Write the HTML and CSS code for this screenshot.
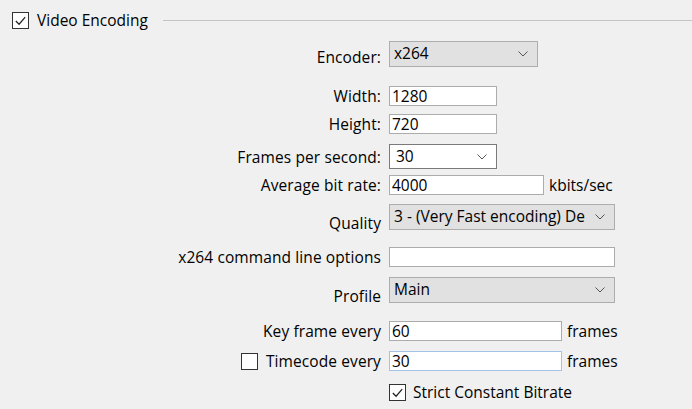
FILE: index.html
```html
<!DOCTYPE html>
<html>
<head>
<meta charset="utf-8">
<link rel="stylesheet" href="styles.css">
</head>
<body>
<div class="panel">
  <div class="header">
    <span class="check checked"><svg viewBox="0 0 16 16" width="16" height="16"><polyline points="3,8.5 6.5,12 13,4.5" fill="none" stroke="#222" stroke-width="1.3"/></svg></span>
    <span class="header-title">Video Encoding</span>
    <span class="header-line"></span>
  </div>

  <div class="row r-encoder">
    <label class="lbl lbl-low">Encoder:</label>
    <div class="combo gray w-enc"><span class="val">x264</span><svg class="chev" viewBox="0 0 10 6" width="10" height="6"><polyline points="0.5,0.5 5,5 9.5,0.5" fill="none" stroke="#555" stroke-width="1"/></svg></div>
  </div>

  <div class="row r-width">
    <label class="lbl">Width:</label>
    <div class="field w-small"><span class="val">1280</span></div>
  </div>

  <div class="row r-height">
    <label class="lbl">Height:</label>
    <div class="field w-small"><span class="val">720</span></div>
  </div>

  <div class="row r-fps">
    <label class="lbl">Frames per second:</label>
    <div class="combo white w-small"><span class="val">30</span><svg class="chev" viewBox="0 0 10 6" width="10" height="6"><polyline points="0.5,0.5 5,5 9.5,0.5" fill="none" stroke="#555" stroke-width="1"/></svg></div>
  </div>

  <div class="row r-abr">
    <label class="lbl">Average bit rate:</label>
    <div class="field w-abr"><span class="val">4000</span></div>
    <span class="unit">kbits/sec</span>
  </div>

  <div class="row r-quality">
    <label class="lbl lbl-bottom">Quality</label>
    <div class="combo gray w-wide"><span class="val clip">3 - (Very Fast encoding) De</span><svg class="chev" viewBox="0 0 10 6" width="10" height="6"><polyline points="0.5,0.5 5,5 9.5,0.5" fill="none" stroke="#555" stroke-width="1"/></svg></div>
  </div>

  <div class="row r-cmd">
    <label class="lbl">x264 command line options</label>
    <div class="field w-wide"></div>
  </div>

  <div class="row r-profile">
    <label class="lbl lbl-bottom">Profile</label>
    <div class="combo gray w-wide"><span class="val">Main</span><svg class="chev" viewBox="0 0 10 6" width="10" height="6"><polyline points="0.5,0.5 5,5 9.5,0.5" fill="none" stroke="#555" stroke-width="1"/></svg></div>
  </div>

  <div class="row r-key">
    <label class="lbl">Key frame every</label>
    <div class="field w-key"><span class="val">60</span></div>
    <span class="unit">frames</span>
  </div>

  <div class="row r-tc">
    <label class="lbl"><span class="check"></span><span>Timecode every</span></label>
    <div class="field focus w-key"><span class="val">30</span></div>
    <span class="unit">frames</span>
  </div>

  <div class="row r-strict">
    <span class="lbl"></span>
    <div class="checkline">
      <span class="check checked"><svg viewBox="0 0 16 16" width="16" height="16"><polyline points="3,8.5 6.5,12 13,4.5" fill="none" stroke="#222" stroke-width="1.3"/></svg></span>
      <span>Strict Constant Bitrate</span>
    </div>
  </div>
</div>
</body>
</html>
```

FILE: styles.css
```css
html, body {
  margin: 0;
  padding: 0;
  background: #f0f0f0;
}
body {
  font-family: "Open Sans", "Noto Sans", "Liberation Sans", sans-serif;
  font-size: 15.5px;
  color: #000;
  width: 692px;
  height: 409px;
  overflow: hidden;
}
.panel {
  display: flex;
  flex-direction: column;
}
.header {
  height: 40px;
  display: flex;
  align-items: center;
  padding-left: 12px;
}
.header-title {
  margin-left: 8px;
}
.header-line {
  flex: 1;
  height: 1px;
  background: #c4c4c4;
  margin-left: 15px;
}
.check {
  width: 15px;
  height: 15px;
  border: 1px solid #333;
  background: #fff;
  display: inline-flex;
  align-items: center;
  justify-content: center;
  flex: none;
}
.check svg {
  width: 15px;
  height: 15px;
}
.row {
  display: grid;
  grid-template-columns: 381px auto auto;
  justify-content: start;
  align-items: center;
  column-gap: 8px;
}
.lbl {
  text-align: right;
  display: flex;
  justify-content: flex-end;
  align-items: center;
  gap: 8px;
  line-height: 20px;
  white-space: nowrap;
  letter-spacing: 0.1px;
}
.lbl-low { align-self: end; }
.lbl-bottom { align-self: end; margin-bottom: -3px; }
.unit { margin-left: -3px; line-height: 20px; }
.field {
  box-sizing: border-box;
  height: 20px;
  background: #fff;
  border: 1px solid #acacac;
  padding: 0 2px;
  line-height: 18px;
}
.field .val { display: block; line-height: 18px; }
.field.focus { border-color: #a3c4e6; }
.combo {
  box-sizing: border-box;
  display: flex;
  align-items: center;
  justify-content: space-between;
  padding: 0 9px 0 4px;
  border: 1px solid #adadad;
  background: #e1e1e1;
  height: 26px;
}
.combo.white {
  background: #fff;
  border-color: #7a7a7a;
  height: 25px;
  padding-left: 6px;
}
.combo .val {
  margin-top: -2px;
  white-space: nowrap;
  line-height: 20px;
}
.combo .clip {
  overflow: hidden;
  flex: 1;
  min-width: 0;
  margin-right: 8px;
}
.chev { flex: none; }
.w-enc { width: 149px; height: 26px; }
.w-small { width: 108px; }
.w-abr { width: 155px; }
.w-wide { width: 226px; }
.w-key { width: 173px; }

.r-encoder { margin-top: 1px; }
.r-width { margin-top: 19px; }
.r-height { margin-top: 8px; }
.r-fps { margin-top: 10px; }
.r-abr { margin-top: 6px; }
.r-quality { margin-top: 9px; }
.r-cmd { margin-top: 17px; }
.r-profile { margin-top: 10px; }
.r-key { margin-top: 18px; }
.r-tc { margin-top: 10px; }
.r-strict { margin-top: 10px; }
.checkline {
  display: flex;
  align-items: center;
  gap: 7px;
}
```
